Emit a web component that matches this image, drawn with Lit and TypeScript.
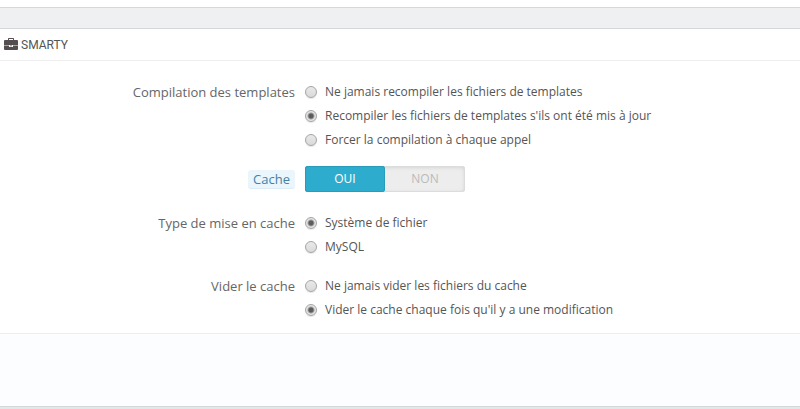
import { LitElement, html, css } from "lit";
import { customElement, property, state } from "lit/decorators.js";

@customElement("radio-group")
class RadioGroup extends LitElement {
  @property() label = "";
  @property() name = "";
  @property({ type: Array }) options: string[] = [];
  @property({ type: Number }) selected = 0;

  static styles = css`
    :host { display: block; }
    .group {
      display: grid;
      grid-template-columns: 59fr 99fr;
      column-gap: 10px;
    }
    .title {
      font-size: 13px;
      line-height: 24px;
      text-align: right;
      color: #666;
    }
    .option {
      display: flex;
      align-items: center;
      gap: 8px;
      height: 24px;
      font-size: 12px;
      line-height: 24px;
      color: #555;
    }
    .radio {
      appearance: none;
      box-sizing: border-box;
      flex: none;
      width: 12px;
      height: 12px;
      margin: 0;
      border: 1px solid #a5a5a5;
      border-radius: 50%;
      background: linear-gradient(#e9e9e9, #dadada);
      box-shadow: 0 1px 1px #0000001a;
    }
    .radio:checked {
      background: radial-gradient(circle, #5c5c5c 0 2px, #5c5c5c 2px, #e4e4e4 4px);
    }
  `;

  render() {
    return html`
      <div class="group" role="radiogroup" aria-labelledby="title">
        <div class="title" id="title">${this.label}</div>
        <div>
          ${this.options.map(
            (text, i) => html`
              <label class="option">
                <input class="radio" type="radio" name=${this.name} .checked=${i === this.selected}
                  @change=${() => (this.selected = i)} />
                <span>${text}</span>
              </label>
            `
          )}
        </div>
      </div>
    `;
  }
}

@customElement("app-root")
class AppRoot extends LitElement {
  @state() cache = true;

  static styles = css`
    :host {
      display: block;
      font-family: "Open Sans", "Noto Sans", sans-serif;
      background: #eff0f2;
      min-height: 100vh;
    }
    .previous {
      height: 7px;
      background: #fff;
      border-bottom: 1px solid #d3d8db;
    }
    .panel {
      margin-top: 20px;
      background: #fff;
      border-top: 1px solid #d3d8db;
      border-bottom: 1px solid #d3d8db;
      box-shadow: 0 2px 0 #0000000a;
    }
    .heading {
      display: flex;
      align-items: center;
      gap: 3px;
      height: 31px;
      margin: 0;
      padding-left: 4px;
      border-bottom: 1px solid #eee;
      font: 400 12px "Ubuntu Condensed", Roboto, sans-serif;
      color: #555;
    }
    .icon { width: 14px; height: 15px; fill: #554e4e; }
    .body {
      display: flex;
      flex-direction: column;
      gap: 15px;
      padding: 19px 0 11px;
    }
    .row {
      display: grid;
      grid-template-columns: 59fr 99fr;
      column-gap: 10px;
      align-items: center;
      height: 24px;
      margin-bottom: 5px;
    }
    .cache {
      justify-self: end;
      padding: 0 5px;
      border-radius: 3px;
      background: #ebf5fc;
      border-bottom: 1px solid #dcecf6;
      font-size: 13px;
      line-height: 18px;
      color: #3f82a8;
    }
    .toggle {
      display: grid;
      grid-template-columns: 1fr 1fr;
      box-sizing: border-box;
      width: 160px;
      height: 26px;
      margin: -1px 0;
      border-radius: 3px;
      background: #ededed;
      box-shadow: inset 0 0 0 1px #dcdcdc, inset 0 1px 4px #00000026;
    }
    .side {
      position: relative;
      border-radius: 3px;
      font-size: 12px;
      line-height: 26px;
      text-align: center;
      color: #bbb;
    }
    .side:has(.choice:checked) {
      background: #2eacce;
      box-shadow: inset 0 0 0 1px #279cbb;
      color: #fff;
    }
    .choice {
      position: absolute;
      inset: 0;
      margin: 0;
      opacity: 0;
    }
    .footer {
      height: 72px;
      background: #fcfdfe;
      border-top: 1px solid #eee;
    }
  `;

  render() {
    return html`
      <div class="previous"></div>
      <section class="panel">
        <h3 class="heading">
          <svg class="icon" viewBox="0 0 14 15" aria-hidden="true">
            <path fill-rule="evenodd" d="M4 3V1.8Q4 1 4.8 1h4.4q.8 0 .8.8V3h3q1 0 1 1v4H0V4q0-1 1-1zM5 3h4V2H5zM0 8.5h5v1q0 .5.5.5h3q.5 0 .5-.5v-1h5V12q0 1-1 1H1q-1 0-1-1zM6 8.5h2v.8H6z" />
          </svg>
          SMARTY
        </h3>
        <form class="body">
          <radio-group label="Compilation des templates" name="compile" .selected=${1}
            .options=${[
              "Ne jamais recompiler les fichiers de templates",
              "Recompiler les fichiers de templates s'ils ont été mis à jour",
              "Forcer la compilation à chaque appel",
            ]}></radio-group>
          <div class="row" role="radiogroup" aria-labelledby="cache">
            <span class="cache" id="cache">Cache</span>
            <div class="toggle">
              <label class="side">OUI<input class="choice" type="radio" name="cache" .checked=${this.cache}
                @change=${() => (this.cache = true)} /></label>
              <label class="side">NON<input class="choice" type="radio" name="cache" .checked=${!this.cache}
                @change=${() => (this.cache = false)} /></label>
            </div>
          </div>
          <radio-group label="Type de mise en cache" name="type" .selected=${0}
            .options=${["Système de fichier", "MySQL"]}></radio-group>
          <radio-group label="Vider le cache" name="clear" .selected=${1}
            .options=${[
              "Ne jamais vider les fichiers du cache",
              "Vider le cache chaque fois qu'il y a une modification",
            ]}></radio-group>
        </form>
        <div class="footer"></div>
      </section>
    `;
  }
}
